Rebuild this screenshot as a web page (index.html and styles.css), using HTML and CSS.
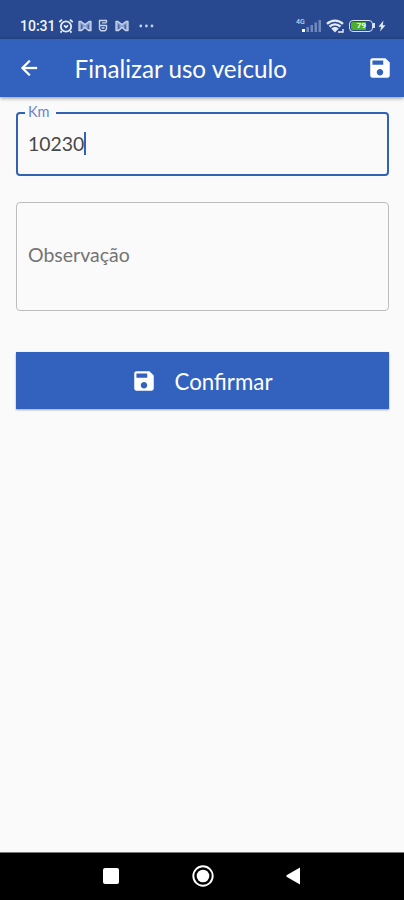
FILE: index.html
```html
<!DOCTYPE html>
<html lang="pt-BR">

<head>
    <meta charset="UTF-8">
    <meta name="viewport" content="width=device-width, initial-scale=1.0">
    <title>Finalizar uso veículo</title>
    <link rel="stylesheet" href="styles.css">
</head>

<body>
    <div class="screen">

        <!--Status bar-->
        <div class="statusBar">
            <span class="clock">10:31</span>
            <svg class="alarm" width="16" height="16" viewBox="0 0 16 16" fill="none" stroke="#e4eaf6" stroke-width="1.8">
                <circle cx="8" cy="8.5" r="5.2" />
                <path d="M1.2 4.2 4 1.7M14.8 4.2 12 1.7M3.8 13l-1.3 1.6M12.2 13l1.3 1.6" />
                <path d="M6 7.400 8 9.200l2-1.800" />
            </svg>
            <svg class="mail" width="14" height="12" viewBox="0 0 14 12" fill="#8fa4d0" stroke="#c9d4eb" stroke-width="1.3" stroke-linejoin="round">
                <path d="M1 1.500h2l4 3 4-3h2v9h-2.500L7 7.500l-3.500 3H1z" />
                <path d="M3.800 9V4.500M10.200 9V4.500" stroke="#28498f" stroke-width="1" />
            </svg>
            <svg class="app" width="10" height="13" viewBox="0 0 10 13" fill="none" stroke="#c9d4eb" stroke-width="1.4" stroke-linejoin="round">
                <path d="M8.500 3.500v-2h-7v5h7v3.500L7 11.700H3L1.500 10V6.500M4 3.900h4.500M3.500 9h3" />
            </svg>
            <svg class="mail" width="14" height="12" viewBox="0 0 14 12" fill="#8fa4d0" stroke="#c9d4eb" stroke-width="1.3" stroke-linejoin="round">
                <path d="M1 1.500h2l4 3 4-3h2v9h-2.500L7 7.500l-3.500 3H1z" />
                <path d="M3.800 9V4.500M10.200 9V4.500" stroke="#28498f" stroke-width="1" />
            </svg>
            <svg class="more" width="15" height="4" viewBox="0 0 15 4" fill="#c3cfe8">
                <circle cx="1.8" cy="2" r="1.4" />
                <circle cx="7.4" cy="2" r="1.4" />
                <circle cx="13" cy="2" r="1.4" />
            </svg>
            <div class="statusRight">
                <span class="network">4G</span>
                <svg class="signal" width="20" height="13" viewBox="0 0 20 13" fill="#7188bd">
                    <path d="M0 10h3v3H0z" fill="#fff" />
                    <path d="M4.500 8H7v5H4.500zM8.500 6H11v7H8.500zM12.500 3.500H15V13h-2.500zM16.500 1H19v12h-2.500z" />
                </svg>
                <svg class="wifi" width="18" height="14" viewBox="0 0 18 14" fill="none" stroke="#e4eaf6" stroke-width="2.300">
                    <path d="M1 4.800c4.600-4.300 11.400-4.300 16 0M3.500 7.700c3.200-3 7.800-3 11 0" />
                    <path d="M5.300 9.500c2.200-2 5.200-2 7.400 0L9 13.500z" fill="#e4eaf6" stroke="none" />
                    <path d="M12 12.900h5V10" stroke-width="1.500" />
                </svg>
                <div class="battery"><span>79</span></div>
                <div class="batteryTip"></div>
                <svg class="bolt" width="8" height="12" viewBox="0 0 8 12" fill="#e4eaf6">
                    <path d="M5.500.5.500 6.800h2.700L2 11.500l5.500-6.300H4.700z" />
                </svg>
            </div>
        </div>

        <!--App bar-->
        <header class="appBar">
            <svg class="back" width="24" height="24" viewBox="0 0 24 24" fill="#fff" stroke="#fff" stroke-width=".3">
                <path d="M20 11H7.830l5.590-5.590L12 4l-8 8 8 8 1.410-1.410L7.830 13H20v-2z" />
            </svg>
            <h1>Finalizar uso veículo</h1>
            <svg class="save" width="26" height="26" viewBox="0 0 24 24" fill="#fff">
                <path d="M17 3H5c-1.110 0-2 .9-2 2v14c0 1.100.890 2 2 2h14c1.100 0 2-.9 2-2V7l-4-4zm-5 16c-1.660 0-3-1.340-3-3s1.340-3 3-3 3 1.340 3 3-1.340 3-3 3zm3-10H5V5h10v4z" />
            </svg>
        </header>

        <!--Form-->
        <main class="form">
            <fieldset class="field active">
                <legend>Km</legend>
                <span class="value">10230</span><span class="cursor"></span>
            </fieldset>
            <div class="field note">Observação</div>
            <button class="confirm">
                <svg width="26" height="26" viewBox="0 0 24 24" fill="#fff">
                    <path d="M17 3H5c-1.110 0-2 .9-2 2v14c0 1.100.890 2 2 2h14c1.100 0 2-.9 2-2V7l-4-4zm-5 16c-1.660 0-3-1.340-3-3s1.340-3 3-3 3 1.340 3 3-1.340 3-3 3zm3-10H5V5h10v4z" />
                </svg>
                <span>Confirmar</span>
            </button>
        </main>

        <!--Navigation bar-->
        <nav class="navBar">
            <svg width="16" height="16" viewBox="0 0 16 16" fill="#fff">
                <rect width="16" height="16" rx="2" />
            </svg>
            <svg width="22" height="22" viewBox="0 0 22 22">
                <circle cx="11" cy="11" r="9.700" fill="none" stroke="#fff" stroke-width="1.900" />
                <circle cx="11" cy="11" r="6.300" fill="#fff" />
            </svg>
            <svg width="15" height="18" viewBox="0 0 15 18" fill="#fff">
                <path d="M14 .5v17L.5 9.700V8.300z" />
            </svg>
        </nav>
    </div>
</body>

</html>
```

FILE: styles.css
```css
* {
    box-sizing: border-box;
}

body {
    margin: 0;
    font-family: Lato, "Liberation Sans", sans-serif;
    background-color: #fafafa;
}

svg {
    display: block;
    flex: none;
}

.screen {
    display: flex;
    flex-direction: column;
    height: 900px;
}

.statusBar {
    display: flex;
    align-items: center;
    height: 39px;
    padding: 12px 18px 0 20px;
    background-color: #28498f;
    color: #f2f5fb;
}

.clock {
    width: 38px;
    font-family: Roboto, sans-serif;
    font-size: 14px;
    font-weight: 500;
    line-height: 16px;
    white-space: nowrap;
}

.app {
    margin: 0 7px 0 6px;
}

.alarm {
    margin-right: 4px;
}

.more {
    margin-left: 10px;
}

.statusRight {
    display: flex;
    align-items: center;
    margin-left: auto;
}

.network {
    width: 6px;
    margin-top: -8px;
    color: #c3cfe8;
    font-family: Roboto, sans-serif;
    font-size: 7px;
    font-weight: 500;
}

.wifi {
    margin: 0 5px 0 4px;
}

.battery {
    display: flex;
    width: 24px;
    height: 12px;
    padding: 1px;
    border: 1.5px solid #d7e0f1;
    border-radius: 4px;
}

.battery span {
    width: 15px;
    border-radius: 2px 0 0 2px;
    background-color: #4dae2e;
    color: #fff;
    font-family: Roboto, sans-serif;
    font-size: 8px;
    font-weight: 700;
    line-height: 8px;
    text-align: right;
}

.batteryTip {
    width: 2px;
    height: 5px;
    background-color: #d7e0f1;
}

.bolt {
    margin-left: 3px;
}

.appBar {
    display: flex;
    align-items: center;
    height: 58px;
    padding: 0 11px 0 17px;
    background-color: #3262be;
    box-shadow: 0 1px 4px rgba(0, 0, 0, 0.45);
}

.appBar h1 {
    margin: 2px auto 0 33.5px;
    color: #fff;
    font-size: 24.2px;
    font-weight: 400;
    line-height: 30px;
}

.form {
    flex: 1;
    padding: 7px 15px 0 16px;
}

.field {
    margin: 0;
    border: 1px solid #bdbdbd;
    border-radius: 4px;
}

.active {
    display: flex;
    height: 72px;
    padding: 10px 10px 0;
    border: 2px solid #3262b4;
}

.active legend {
    height: 18px;
    margin-left: -3px;
    padding: 0 6px 0 3px;
    color: #6986ca;
    font-size: 14.5px;
    line-height: 16px;
}

.value {
    color: #484848;
    font-size: 19.4px;
    line-height: 23px;
}

.cursor {
    display: inline-block;
    width: 2px;
    height: 23px;
    background-color: #3262be;
}

.note {
    display: flex;
    align-items: center;
    height: 109px;
    margin-top: 26px;
    padding: 0 11px 4px;
    color: #747474;
    font-size: 19.5px;
}

.confirm {
    display: flex;
    align-items: center;
    justify-content: center;
    gap: 18px;
    width: 100%;
    height: 57px;
    margin-top: 41px;
    padding: 1px 8px 0 6px;
    border: none;
    background-color: #3262be;
    box-shadow: 0 1px 2px rgba(0, 0, 0, 0.35);
    color: #fff;
    font-family: inherit;
    font-size: 22.3px;
}

.navBar {
    display: flex;
    align-items: center;
    height: 48px;
    padding: 0 0 1px 103px;
    gap: 73px;
    border-top: 1px solid #777;
    background-color: #000;
}

.navBar svg:last-child {
    margin-left: -1px;
}
```
